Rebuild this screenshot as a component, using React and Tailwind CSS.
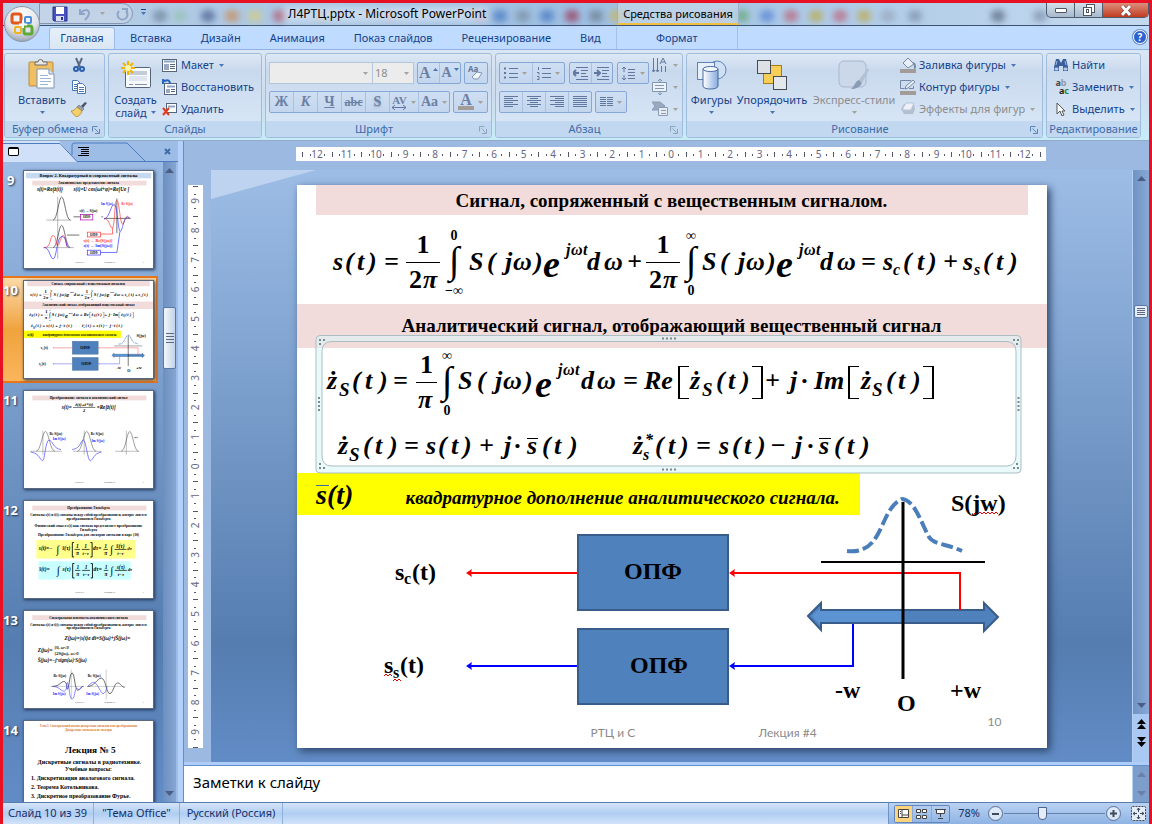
import React from "react";

const UI = "font-['Noto_Sans','Open_Sans',sans-serif]";
const SERIF = "font-['Liberation_Serif',serif]";

/* ---------- small shared pieces ---------- */

const Caret = ({ off }) => (
  <svg width="5" height="3" viewBox="0 0 5 3" className="shrink-0">
    <path d="M0 0h5L2.5 3z" fill={off ? "#a5a29b" : "#4a76b5"} />
  </svg>
);

const Launcher = ({ off }) => (
  <svg width="9" height="9" viewBox="0 0 9 9" fill="none" stroke={off ? "#8fa3be" : "#5d84b8"}>
    <path d="M1.5 6.500V1.500H6.500" />
    <path d="M3.500 3.500l4 4M8.500 4v4.500H4" />
  </svg>
);

const Group = ({ title, className, launcher, off, children }) => (
  <section
    className={`${className} flex shrink-0 flex-col overflow-hidden rounded-[3px] border border-[#9fbddb] bg-linear-to-b from-[#dde8f5] via-[#c9d9ed] via-20% to-[#dbe9f8]`}
  >
    <div className="flex h-[68px]">{children}</div>
    <footer className={`flex h-4 items-center bg-[#c1d8f0] text-[11px] leading-4 text-[#3e6aaa] ${launcher ? "px-1" : ""}`}>
      <span className="flex-1 text-center whitespace-nowrap">{title}</span>
      {launcher && (
        <button aria-label={`${title}: параметры`}>
          <Launcher off={off} />
        </button>
      )}
    </footer>
  </section>
);

const BigButton = ({ icon, label, second, off, className }) => (
  <button
    className={`${className} flex flex-col items-center pt-[2px] text-[11px] leading-[13px] ${off ? "text-[#8d8d8d]" : "text-[#15428b]"}`}
  >
    <span className="flex h-[37px] items-center">{icon}</span>
    <span className="whitespace-nowrap">{label}</span>
    <span className="flex h-[13px] items-center gap-1">
      {second}
      <Caret off={off} />
    </span>
  </button>
);

const SmallButton = ({ icon, label, caret, off }) => (
  <button
    aria-label={label ? undefined : "Команда"}
    className={`flex h-[22px] items-center gap-[3px] text-[11px] whitespace-nowrap ${off ? "text-[#8d8d8d]" : "text-[#15428b]"}`}
  >
    {icon}
    {label}
    {caret && (
      <span className="pl-[2px]">
        <Caret off={off} />
      </span>
    )}
  </button>
);

const Strip = ({ className = "", children }) => (
  <div
    className={`flex h-[22px] divide-x divide-[#a9c1e0] rounded-[2px] border border-[#85a8d6] bg-linear-to-b from-[#cfdff3] to-[#c3d6ee] ${className}`}
  >
    {children}
  </div>
);

const Tool = ({ name, caret, className = "flex-1", children }) => (
  <button
    aria-label={name}
    disabled
    className={`flex items-center justify-center gap-1 text-[#6b80a3] ${className}`}
  >
    {children}
    {caret && <Caret off />}
  </button>
);

const Lines = ({ rows, x = 1 }) => (
  <svg width="16" height="12" viewBox="0 0 16 12" stroke="#60789d">
    {rows.map(([from, to], i) => (
      <path key={i} d={`M${from + x} ${i * 2 + 0.5}H${to + x}`} />
    ))}
  </svg>
);

/* ---------- icons ---------- */

const PasteIcon = () => (
  <svg width="28" height="31" viewBox="0 0 28 31">
    <rect x="1" y="3" width="24" height="24" rx="1" fill="#efbf62" stroke="#b98b3b" />
    <path d="M7 5V3h3a2.500 2.500 0 0 1 5 0h4v3H7z" fill="#e8e8e8" stroke="#6b6b6b" />
    <path d="M9 10h12l5 5v14H9z" fill="#fff" stroke="#7c93b3" />
    <path d="M21 10v5h5" fill="#dce7f5" stroke="#7c93b3" />
    <path d="M12 16.500h8M12 19.500h11M12 22.500h11M12 25.500h8" stroke="#9cb4d6" />
  </svg>
);

const CutIcon = () => (
  <svg width="16" height="16" viewBox="0 0 16 16" fill="none">
    <path d="M5 1l4 9M11 1L7 10" stroke="#5a6b82" strokeWidth="2" />
    <circle cx="5" cy="12" r="2" stroke="#2b5fb0" strokeWidth="2" />
    <circle cx="11" cy="12" r="2" stroke="#2b5fb0" strokeWidth="2" />
  </svg>
);

const CopyIcon = () => (
  <svg width="16" height="16" viewBox="0 0 16 16" fill="#fff" stroke="#4a77b8">
    <path d="M1.500 1.500h5l3 3v7h-8z" />
    <path d="M3 5.500h5M3 7.500h5M3 9.500h3" />
    <path d="M6.500 4.500h5l3 3v7h-8z" />
    <path d="M8 8.500h5M8 10.500h5M8 12.500h5" />
  </svg>
);

const BrushIcon = () => (
  <svg width="16" height="16" viewBox="0 0 16 16">
    <path d="M10 5l4-4 2 1-4 5z" fill="#4a5568" />
    <path d="M8 4l5 4-2 2-5-4z" fill="#9aa4b4" stroke="#555" strokeWidth=".5" />
    <path d="M6 6l5 4c-1 3-3 5-5 6-2-1-4-3-6-6 3 0 4-2 6-4z" fill="#f3d06a" stroke="#a87b22" strokeWidth=".7" />
  </svg>
);

const NewSlideIcon = () => (
  <svg width="30" height="28" viewBox="0 0 30 28">
    <rect x="4.500" y="6.500" width="25" height="20" rx="1" fill="#f7fafd" stroke="#56657e" />
    <rect x="8" y="10" width="18" height="4" fill="#c4ccda" />
    <rect x="8" y="15" width="18" height="5" fill="#dfe5ef" />
    <path d="M8 23.500h4M14 23.500h12" stroke="#8392ab" />
    <path d="M7 0v14M0 7h14M2 2l10 10M12 2L2 12" stroke="#f0b400" strokeWidth="2" />
    <circle cx="7" cy="7" r="3" fill="#fff7b0" />
  </svg>
);

const LayoutIcon = () => (
  <svg width="16" height="14" viewBox="0 0 16 14">
    <rect x=".5" y="1.500" width="14" height="12" fill="#fff" stroke="#56657e" />
    <path d="M2 3.500h11" stroke="#8ea4c6" strokeWidth="2" />
    <rect x="2" y="6" width="5" height="6" fill="#9aa9c2" />
    <path d="M8 6.500h5M8 8.500h5M8 10.500h5" stroke="#56657e" />
  </svg>
);

const ResetIcon = () => (
  <svg width="16" height="16" viewBox="0 0 16 16">
    <rect x="2.500" y="4.500" width="12" height="11" fill="#fff" stroke="#56657e" />
    <path d="M5 7.500h8" stroke="#8ea4c6" strokeWidth="2" />
    <path d="M4 10h4v4H4z" fill="#9aa9c2" />
    <path d="M9 10.500h4M9 12.500h4" stroke="#56657e" />
    <path d="M1 5V1l2 1c3-2 5 0 5 3" fill="none" stroke="#2a62bf" strokeWidth="2" />
  </svg>
);

const DeleteIcon = () => (
  <svg width="16" height="14" viewBox="0 0 16 14">
    <rect x="4.500" y="1.500" width="10" height="9" fill="#fff" stroke="#56657e" />
    <path d="M6 4.500h7" stroke="#8ea4c6" strokeWidth="2" />
    <path d="M1 6l6 7M7 6l-6 7" stroke="#e03a1c" strokeWidth="2" />
  </svg>
);

const ShapesIcon = () => (
  <svg width="30" height="30" viewBox="0 0 30 30">
    <defs>
      <linearGradient id="cyl" x1="0" x2="1">
        <stop offset="0" stopColor="#fff" />
        <stop offset="1" stopColor="#86abdf" />
      </linearGradient>
    </defs>
    <circle cx="20" cy="10" r="9" fill="#cfe0f5" stroke="#5c82b8" />
    <rect x=".5" y="2.500" width="17" height="17" fill="#e6effa" stroke="#5c82b8" />
    <path d="M6 9v17c0 4 15 4 15 0V9" fill="url(#cyl)" stroke="#46699c" />
    <ellipse cx="13.500" cy="9" rx="7.500" ry="2.500" fill="#f4f9ff" stroke="#46699c" />
  </svg>
);

const ArrangeIcon = () => (
  <svg width="32" height="31" viewBox="0 0 32 31">
    <rect x="7.500" y="6.500" width="18" height="18" fill="#f8cf56" stroke="#a97e18" />
    <rect x="1.500" y="1.500" width="13" height="13" fill="#dde1e6" stroke="#454b55" />
    <rect x="17.500" y="17.500" width="13" height="13" fill="#e4e7eb" stroke="#454b55" />
  </svg>
);

const StylesIcon = () => (
  <svg width="32" height="32" viewBox="0 0 32 32">
    <rect x="1" y="2" width="27" height="26" rx="5" fill="#cbd8ea" stroke="#a8b7cd" />
    <path d="M30 9L21 21l3 3 7-13z" fill="#b3c0d2" />
    <path d="M21 21l3 3c-2 4-6 6-11 6 4-3 4-8 8-9z" fill="#8a9bb5" />
  </svg>
);

const FillIcon = () => (
  <svg width="16" height="16" viewBox="0 0 16 16">
    <path d="M3 6l5-5 6 6-6 4z" fill="#e9eff7" stroke="#7487a5" />
    <path d="M13 6c3 1 2 5 1 5" fill="none" stroke="#7487a5" strokeWidth="2" />
    <rect y="12" width="16" height="4" fill="#a39b97" />
  </svg>
);

const OutlineIcon = () => (
  <svg width="16" height="16" viewBox="0 0 16 16">
    <path d="M11 1.500H.5v8h4M13.500 7v2.500H9" fill="none" stroke="#7487a5" />
    <path d="M5 10l1-3 7-6 2 2-7 6z" fill="#e9eff7" stroke="#7487a5" />
    <rect y="12" width="16" height="4" fill="#a39b97" />
  </svg>
);

const EffectsIcon = () => (
  <svg width="16" height="16" viewBox="0 0 16 16">
    <path d="M1 8l3-5h10l1 5-2 5H4z" fill="#b4bfd0" />
    <path d="M3 7l3-5h8l-3 7H3z" fill="#eef2f8" stroke="#bac5d6" />
  </svg>
);

const FindIcon = () => (
  <svg width="16" height="14" viewBox="0 0 16 14">
    <path d="M3 1h3l2 4 2-4h3l2 8v4h-5V8H6v5H1V9z" fill="#3a5f9e" />
    <path d="M2 10h3v2H2zM11 10h3v2h-3zM4 3l-1 4M12 3l1 4" fill="#dfe9f8" stroke="#9fb8dd" />
  </svg>
);

const ReplaceIcon = () => (
  <span className="flex w-4 flex-col text-[9px] leading-[8px] font-bold">
    <span className="text-[#444]">
      a<span className="text-[#8d99aa]">b</span>
    </span>
    <span className="text-right text-[#222]">
      a<span className="text-[#1c8a2b]">c</span>
    </span>
  </span>
);

const SelectIcon = () => (
  <svg width="16" height="14" viewBox="0 0 16 14">
    <path d="M4 1v11l3-3 2 5 2-1-2-4h3z" fill="#fff" stroke="#555" />
  </svg>
);

const OfficeOrb = () => (
  <svg width="38" height="38" viewBox="0 0 38 38">
    <defs>
      <radialGradient id="orb" cx=".5" cy=".25" r=".8">
        <stop offset="0" stopColor="#fff" />
        <stop offset=".6" stopColor="#dfe3ea" />
        <stop offset="1" stopColor="#8c99ad" />
      </radialGradient>
    </defs>
    <circle cx="19" cy="19" r="17.500" fill="url(#orb)" stroke="#8b98ac" />
    <g fill="none" strokeWidth="3">
      <rect x="9" y="9" width="9" height="9" rx="2" stroke="#e2591b" />
      <rect x="22" y="12" width="6" height="6" rx="1" stroke="#4b8fd8" strokeWidth="2" />
      <rect x="12" y="22" width="6" height="6" rx="1" stroke="#f1b31c" strokeWidth="2" />
      <rect x="21" y="21" width="8" height="8" rx="2" stroke="#5faa35" />
    </g>
    <path d="M20 15v8M16 19.500h8" stroke="#f6f8fb" strokeWidth="2" />
  </svg>
);

/* ---------- slide contents ---------- */

const M = ({ x, y, s = 26, a, children }) => (
  <text x={x} y={y} fontSize={s} textAnchor={a}>
    {children}
  </text>
);

const Row = ({ y, items }) =>
  items.map(([t, x], i) => (
    <M key={i} x={x} y={y}>
      {t}
    </M>
  ));

const Fraction = ({ x, w, y, bottom }) => (
  <>
    <g className="not-italic">
      <M x={x + w / 2} y={y - 9} a="middle">1</M>
    </g>
    <path d={`M${x} ${y + 0.5}h${w}`} stroke="#000" />
    {bottom}
  </>
);

const Integral = ({ x, y, top, low }) => (
  <g className="not-italic">
    <M x={x} y={y} s={38} a="middle">∫</M>
    <M x={x} y={y - 33} s={14} a="middle">{top}</M>
    <M x={x} y={y + 22} s={14} a="middle">{low}</M>
  </g>
);

const Exponent = ({ x, y }) => (
  <>
    <M x={x} y={y + 8} s={38}>e</M>
    <M x={x + 23} y={y - 14} s={16}>j</M>
    <M x={x + 28} y={y - 14} s={16}>ω</M>
    <M x={x + 40} y={y - 14} s={16}>t</M>
  </>
);

const Formulas = () => (
  <g className={`${SERIF} font-bold italic`}>
    <Row y={270} items={[["s", 333], ["(", 345], ["t", 357], [")", 368], ["=", 384]]} />
    {[0, 240].map((dx) => (
      <Fraction key={dx} x={406 + dx} w={34} y={262} bottom={
        <>
          <g className="not-italic"><M x={409 + dx} y={288}>2</M></g>
          <M x={423 + dx} y={288}>π</M>
        </>
      } />
    ))}
    <Integral x={454} y={273} top="0" low="−∞" />
    <Integral x={691} y={273} top="∞" low="0" />
    {[0, 233].map((dx) => (
      <g key={dx}>
        <Row y={270} items={[["S", 469 + dx], ["(", 487 + dx], ["j", 505 + dx], ["ω", 513 + dx], [")", 534 + dx], ["d", 587 + dx], ["ω", 604 + dx]]} />
        <Exponent x={543 + dx} y={269} />
      </g>
    ))}
    <Row y={270} items={[["+", 627], ["=", 861], ["s", 883], ["(", 903], ["t", 917], [")", 928], ["+", 943], ["s", 963], ["(", 983], ["t", 996], [")", 1009]]} />
    <M x={893} y={275} s={16}>c</M>
    <M x={974} y={275} s={16}>s</M>

    <Row y={389} items={[["ż", 327], ["(", 352], ["t", 365], [")", 379], ["=", 393], ["S", 458], ["(", 477], ["j", 495], ["ω", 503], [")", 524], ["d", 581], ["ω", 597], ["=", 623], ["Re", 644], ["ż", 690], ["(", 716], ["t", 728], [")", 741], ["+", 765], ["j", 790], ["·", 801], ["Im", 814], ["ż", 861], ["(", 886], ["t", 898], [")", 912]]} />
    {[339, 702, 872].map((x) => (
      <M key={x} x={x} y={396} s={19}>S</M>
    ))}
    <Fraction x={416} w={21} y={382} bottom={<M x={418} y={408}>π</M>} />
    <Integral x={447} y={393} top="∞" low="0" />
    <Exponent x={535} y={389} />
    <path d="M679 366v33M762 366v33M849 366v33M933 366v33" stroke="#000" strokeWidth="2" />
    <path d="M689 366.500h-10M689 398.500h-10M752 366.500h10M752 398.500h10M859 366.500h-10M859 398.500h-10M923 366.500h10M923 398.500h10" stroke="#000" />

    <Row y={454} items={[["ż", 338], ["(", 363], ["t", 375], [")", 389], ["=", 404], ["s", 426], ["(", 438], ["t", 451], [")", 463], ["+", 479], ["j", 504], ["·", 514], ["s", 527], ["(", 542], ["t", 554], [")", 569]]} />
    <Row y={454} items={[["ż", 633], ["(", 655], ["t", 668], [")", 680], ["=", 696], ["s", 719], ["(", 732], ["t", 744], [")", 757], ["−", 770], ["j", 795], ["·", 807], ["s", 819], ["(", 834], ["t", 847], [")", 861]]} />
    <M x={349} y={461} s={19}>S</M>
    <M x={643} y={460} s={16}>s</M>
    <M x={645} y={445} s={16}>*</M>
    <path d="M527 438.500h11M819 438.500h12" stroke="#000" />
    <M x={316} y={504} s={28}>s(t)</M>
    <path d="M316 485.500h13" stroke="#3a6ea5" />
  </g>
);

const Diagram = () => (
  <g className={`${SERIF} font-bold`}>
    <g fill="#4f81bd" stroke="#385d8a" strokeWidth="2">
      <rect x="578" y="535" width="150" height="75" />
      <rect x="578" y="629" width="150" height="75" />
      <path d="M808 616l13-13v7h163v-7l14 14-14 14v-8H821v7z" />
    </g>
    <path d="M812 616l8-8v3h82v11h-82v3z" fill="#5b93d3" />
    <M x={624} y={579} s={24}>ОПФ</M>
    <M x={630} y={673} s={24}>ОПФ</M>
    <M x={395} y={580} s={24}>s</M>
    <M x={404} y={584} s={16}>c</M>
    <M x={412} y={580} s={24}>(t)</M>
    <M x={384} y={673} s={24}>s</M>
    <M x={393} y={678} s={16}>s</M>
    <M x={400} y={673} s={24}>(t)</M>
    <path d="M384 676l2-2 2 2 2-2 2 2M393 681l2-2 2 2 2-2 2 2" fill="none" stroke="#e00000" />
    <path d="M974 514l2-2 2 2 2-2 2 2 2-2 2 2 2-2 2 2 2-2 2 2 2-2 2 2" fill="none" stroke="#e00000" />
    <g fill="none" strokeWidth="2">
      <path d="M577 573H470M960 610V573H733" stroke="#f00" />
      <path d="M577 666H470M853 624V666H733" stroke="#00f" />
      <path d="M821 562H985" stroke="#000" />
    </g>
    <path d="M466 573l6-4-1 4 1 4zM729 573l6-4-1 4 1 4z" fill="#f00" />
    <path d="M466 666l6-4-1 4 1 4zM729 666l6-4-1 4 1 4z" fill="#00f" />
    <path d="M847 551C885 555 878 510 902 499C915 500 922 525 928 535C932 545 945 543 962 551" fill="none" stroke="#4a7ebb" strokeWidth="4" strokeDasharray="12 4" />
    <path d="M903 502V679" stroke="#000" strokeWidth="3" />
    <M x={951} y={511} s={24}>S(jw)</M>
    <M x={835} y={698} s={24}>-w</M>
    <M x={897} y={711} s={24}>O</M>
    <M x={950} y={698} s={24}>+w</M>
  </g>
);

const Selection = () => (
  <g>
    <path
      fillRule="evenodd"
      d="M320 335.500H1017q4 0 4 4V469q0 4-4 4H320q-4 0-4-4V339.500q0-4 4-4zM332 341.500q-10 0-10 10V456q0 10 10 10H1006q10 0 10-10V351.500q0-10-10-10z"
      fill="#dcf5f6"
      fillOpacity=".6"
      stroke="#a9bfc4"
    />
    <path d="M319 340h6M319 344h3M1013 340h6M1016 344h3M319 468h6M319 464h3M1013 468h6M1016 464h3M662 338.500h14M662 469.500h14M319 397v14M1018.500 397v14" stroke="#7c8a8e" strokeWidth="2" strokeDasharray="2 2" />
  </g>
);

const Slide = () => (
  <article className="relative h-[563px] w-[750px] shrink-0 bg-white text-black shadow-[3px_3px_8px_#2b4468]">
    <h2 className={`${SERIF} mx-[19px] h-[30px] bg-[#f2dcdb] text-center text-[19px] leading-[32px] font-bold`}>
      Сигнал, сопряженный с вещественным сигналом.
    </h2>
    <h2 className={`${SERIF} mt-[89px] h-11 bg-[#f2dcdb] text-center text-[19px] leading-[44px] font-bold`}>
      Аналитический сигнал, отображающий вещественный сигнал
    </h2>
    <p className={`${SERIF} mt-[125px] h-[42px] w-[563px] bg-[#ff0] pl-[109px] text-[19px] leading-[50px] font-bold whitespace-nowrap italic`}>
      квадратурное дополнение аналитического сигнала.
    </p>
    <svg viewBox="297 185 750 563" className="absolute inset-0 h-full w-full">
      <Formulas />
      <Selection />
      <Diagram />
    </svg>
    <footer className="absolute inset-x-0 bottom-2 flex pl-[294px] font-['Lato',sans-serif] text-xs leading-[14px] text-[#8b8b8b]">
      <span className="w-[168px]">РТЦ и С</span>
      <span>Лекция #4</span>
    </footer>
    <span className="absolute right-[45px] bottom-[18px] font-['Lato',sans-serif] text-xs text-[#8b8b8b]">10</span>
  </article>
);

/* ---------- thumbnails, drawn in slide units (750 x 563) ---------- */

const T = ({ x = 375, y, s = 18, a = "middle", fill, children }) => (
  <text x={x} y={y} fontSize={s} textAnchor={a} fill={fill}>
    {children}
  </text>
);

const Band = ({ y = 54, children }) => (
  <>
    <rect x="48" y={y} width="664" height="28" fill="#f2dcdb" />
    <T y={y + 21} s={20}>{children}</T>
  </>
);

const ThumbFooter = () => (
  <g>
    <T x={325} y={535} s={14} fill="#777">РТЦ и С</T>
    <T x={497} y={535} s={14} fill="#777">Лекция #4</T>
    <T x={695} y={535} s={14} fill="#e08a3c">9</T>
  </g>
);

const bell = (x, base, h, w) =>
  `M${x - w} ${base}C${x - w / 2} ${base} ${x - w / 3} ${base - h} ${x} ${base - h}S${x + w / 2} ${base} ${x + w} ${base}`;

const Thumb9 = () => (
  <>
    <rect x="12" y="10" width="728" height="32" fill="#c6d9f1" />
    <T y={34} s={25}>Вопрос 2. Квадратурный и сопряженный сигналы</T>
    <Band y={56}>Аналитическое представление сигнала</Band>
    <g className="italic">
      <T x={75} y={118} s={30} a="start">s(t)=Re{"{ż(t)}"}</T>
      <T x={288} y={118} s={30} a="start">s(t)=U cos(ωt+φ)=Re[Ue ]</T>
    </g>
    <g fill="none" stroke="#333" strokeWidth="4">
      <path d={bell(219, 285, 135, 50)} />
      <path d="M130 285H275M196 150V510M120 445H290" strokeWidth="2" />
      <path d={bell(219, 445, 130, 50)} />
      <path d="M288 266H330M450 266H460M540 160V360M465 275H620" />
      <path d="M322 372H250" />
    </g>
    <g fill="none" stroke="#f33" strokeWidth="4">
      <path d="M465 275C500 275 500 340 515 330C530 310 525 170 540 170S560 350 580 300S600 260 615 275" />
      <path d="M515 330V366H445M115 445C160 450 150 370 170 375S185 450 200 430S225 310 250 440" />
    </g>
    <g fill="none" stroke="#33f" strokeWidth="4">
      <path d="M465 280C500 270 505 190 525 195S545 350 560 350S580 240 615 275" />
      <path d="M558 350L540 473H445M115 445C150 440 150 510 170 510S190 380 220 380S240 440 260 445" />
    </g>
    <g fill="#fff" stroke="#a0a" strokeWidth="4">
      <rect x="328" y="252" width="72" height="32" />
      <rect x="368" y="355" width="76" height="28" stroke="#f33" />
      <rect x="368" y="460" width="76" height="28" stroke="#33f" />
    </g>
    <T x={364} y={274}>ОПФ</T>
    <T x={406} y={376}>ОПФ</T>
    <T x={406} y={481}>ОПФ</T>
    <T x={375} y={238} s={20}>s(t) → S(jω)</T>
    <T x={430} y={412} s={24} fill="#f22">s(t) → Re[S(jω)]</T>
    <T x={430} y={440} s={24} fill="#22f">s(t) → Im[S(jω)]</T>
    <T x={482} y={198} s={18} fill="#22f">Im S(jω)</T>
    <T x={600} y={198} s={18} fill="#f22">Re S(jω)</T>
    <ThumbFooter />
  </>
);

const Thumb11 = () => (
  <>
    <Band y={26}>Преобразование сигнала в аналитический сигнал</Band>
    <g className="italic">
      <T x={220} y={102} s={30} a="start">s(t)=</T>
      <T x={350} y={86} s={28}>ż(t)+ż*(t)</T>
      <path d="M285 95H415" stroke="#000" strokeWidth="3" />
      <T x={350} y={121} s={26}>2</T>
      <T x={478} y={102} s={30}>=Re[ż(t)]</T>
    </g>
    <g fill="none" stroke="#444" strokeWidth="3">
      <path d={`${bell(125, 350, 115, 55)}${bell(365, 350, 115, 55)}${bell(615, 350, 115, 50)}`} />
      <path d="M35 350H220M285 350H450M530 350H670M110 230V370M350 230V370M595 230V370" strokeWidth="2" />
    </g>
    <g fill="none" stroke="#44f" strokeWidth="4">
      <path d="M40 355C90 360 95 405 108 405S125 285 145 285S170 335 215 340" />
      <path d="M280 340C330 335 330 285 345 285S370 405 385 405S405 360 450 355" />
    </g>
    <T x={185} y={257} s={20}>Re S(jω)</T>
    <T x={205} y={287} s={20} fill="#22f">Im S(jω)</T>
    <T x={425} y={257} s={20}>Re S(jω)</T>
    <T x={430} y={297} s={20} fill="#22f">Im S(jω)</T>
    <T x={650} y={270} s={16}>s(t)</T>
    <ThumbFooter />
  </>
);

const IntegralLine = ({ x, y, l, r }) => (
  <g className="italic">
    <T x={x} y={y} s={32} a="start">{l}</T>
    <T x={x + 110} y={y + 14} s={60}>∫</T>
    <T x={x + 160} y={y} s={32}>{r}</T>
    <path d={`M${x + 205} ${y - 45}h-10v84h10M${x + 300} ${y - 45}h10v84h-10`} fill="none" stroke="#000" strokeWidth="5" />
    <T x={x + 225} y={y - 12} s={32}>1</T>
    <T x={x + 225} y={y + 30} s={32}>π</T>
    <T x={x + 273} y={y - 12} s={32}>1</T>
    <T x={x + 273} y={y + 30} s={28}>t−τ</T>
    <path d={`M${x + 208} ${y - 5}h32M${x + 250} ${y - 5}h45M${x + 376} ${y - 5}h26M${x + 440} ${y - 5}h70`} stroke="#000" strokeWidth="4" />
    <T x={x + 340} y={y} s={32}>dτ=</T>
    <T x={x + 389} y={y - 12} s={32}>1</T>
    <T x={x + 389} y={y + 30} s={32}>π</T>
    <T x={x + 422} y={y + 14} s={60}>∫</T>
    <T x={x + 475} y={y - 12} s={32}>{r}</T>
    <T x={x + 475} y={y + 30} s={28}>t−τ</T>
    <T x={x + 528} y={y} s={28}>dτ</T>
  </g>
);

const Thumb12 = () => (
  <>
    <Band y={26}>Преобразование Гильберта</Band>
    <T y={84} s={20}>Сигналы s(t) и s̄(t) связаны между собой преобразованием, которое зовется</T>
    <T y={108} s={20}>преобразованием Гильберта</T>
    <T y={152} s={21}>Физический смысл s(t) как сигнала представляет преобразование</T>
    <T y={176} s={21}>Гильберта</T>
    <T y={205} s={21}>Преобразование Гильберта для спектров сигналов в паре (10)</T>
    <rect x="72" y="226" width="576" height="108" fill="#ffff8c" />
    <rect x="84" y="350" width="536" height="106" fill="#c8ffff" />
    <IntegralLine x={86} y={286} l="s(t)=−" r="s̄(τ)" />
    <IntegralLine x={88} y={408} l="s̄(t)=" r="s(τ)" />
    <ThumbFooter />
  </>
);

const Thumb13 = () => (
  <>
    <Band y={24}>Спектральная плотность аналитического сигнала</Band>
    <T y={84} s={20}>Сигналы s(t) и s̄(t) связаны между собой преобразованием, которое зовется</T>
    <T y={106} s={20}>преобразованием Гильберта</T>
    <g className="italic">
      <T x={235} y={168} s={31} a="start">Z(jω)=∫s(t)e dt=S(jω)+jS̄(jω)=</T>
      <T x={80} y={240} s={30} a="start">Z(jω)=</T>
      <T x={178} y={222} s={26} a="start">{"{0, ω<0"}</T>
      <T x={178} y={254} s={26} a="start">{"{2S(jω), ω>0"}</T>
      <T x={80} y={297} s={30} a="start">S̄(jω)=−j·sign(ω)·S(jω)</T>
    </g>
    <g fill="none" strokeWidth="4">
      <path d="M150 438H350M275 340V515M370 438H590M478 340V515" stroke="#777" strokeWidth="2" />
      <path d="M165 438C210 438 215 405 235 410S245 470 255 450S265 360 280 360S295 460 312 460S330 435 345 438" stroke="#222" />
      <path d="M165 438C210 438 215 470 235 465S245 400 255 420S262 510 280 510S295 430 312 450S330 435 345 438" stroke="#55f" />
      <path d="M370 438C410 438 425 390 450 390S480 485 500 480S525 415 545 418S560 435 585 445" stroke="#333" />
      <path d="M370 438C390 420 405 400 425 430S450 485 465 478S480 440 485 438" stroke="#55f" />
    </g>
    <T x={208} y={385} s={20}>Re S(jω)</T>
    <T x={205} y={488} s={20} fill="#22f">Im S(jω)</T>
    <T x={408} y={385} s={20}>Re S(jω)</T>
    <T x={400} y={488} s={20} fill="#22f">Im S(jω)</T>
    <ThumbFooter />
  </>
);

const Thumb14 = () => (
  <>
    <T y={32} s={17} fill="#d9772c">Тема 3. Спектральный анализ дискретных сигналов и их преобразования</T>
    <T y={56} s={17} fill="#d9772c">Дискретные сигналы и их спектры</T>
    <T x={386} y={188} s={54}>Лекция № 5</T>
    <T x={380} y={248} s={35}>Дискретные сигналы в радиотехнике.</T>
    <T y={292} s={32}>Учебные вопросы:</T>
    <T x={40} y={344} s={34} a="start">1. Дискретизация аналогового сигнала.</T>
    <T x={40} y={396} s={34} a="start">2. Теорема Котельникова.</T>
    <T x={40} y={448} s={34} a="start">3. Дискретное преобразование Фурье.</T>
  </>
);

const Thumb10 = () => (
  <g transform="translate(-297 -185)">
    <rect x="316" y="185" width="712" height="30" fill="#f2dcdb" />
    <T x={672} y={207} s={19}>Сигнал, сопряженный с вещественным сигналом.</T>
    <rect x="297" y="304" width="750" height="44" fill="#f2dcdb" />
    <T x={672} y={332} s={19}>Аналитический сигнал, отображающий вещественный сигнал</T>
    <rect x="297" y="473" width="563" height="42" fill="#ff0" />
    <g className="italic"><T x={622} y={504} s={19}>квадратурное дополнение аналитического сигнала.</T></g>
    <Formulas />
    <Diagram />
  </g>
);

const thumbs = [
  { n: 9, Art: Thumb9 },
  { n: 10, Art: Thumb10, active: true },
  { n: 11, Art: Thumb11 },
  { n: 12, Art: Thumb12 },
  { n: 13, Art: Thumb13 },
  { n: 14, Art: Thumb14 },
];

/* ---------- rulers ---------- */

const CM = 29.5;

const Ruler = ({ span, vertical }) => {
  const length = vertical ? 563 : 750;
  const mid = length / 2;
  const marks = [];
  for (let i = -span; i <= span; i++) marks.push(i);
  const ticks = [];
  for (let q = -span * 4 - 2; q <= span * 4 + 2; q++) {
    if (q % 4 === 0) continue;
    const p = Math.round(mid + (q * CM) / 4) + 0.5;
    const half = q % 2 === 0;
    ticks.push(vertical ? `M${half ? 5 : 6} ${p}h${half ? 5 : 2}` : `M${p} ${half ? 5 : 7}v${half ? 5 : 2}`);
  }
  return (
    <svg
      width={vertical ? 15 : length}
      height={vertical ? length : 14}
      className={`shrink-0 bg-white ${UI} text-[10px]`}
    >
      <path d={ticks.join("")} stroke="#55556a" />
      {marks.map((i) =>
        vertical ? (
          <text key={i} transform={`translate(11 ${mid + i * CM}) rotate(-90)`} textAnchor="middle" fill="#666680">
            {Math.abs(i)}
          </text>
        ) : (
          <text key={i} x={mid + i * CM} y="11" textAnchor="middle" fill="#666680">
            {Math.abs(i)}
          </text>
        ),
      )}
    </svg>
  );
};

const Arrow = ({ up, fill = "#4a5d85" }) => (
  <svg width="9" height="5" viewBox="0 0 9 5">
    <path d={up ? "M0 5h9L4.500 0z" : "M0 0h9L4.500 5z"} fill={fill} />
  </svg>
);

/* ---------- window parts ---------- */

const blobs = [
  [160, "#5c7088"], [180, "#8fc0a5"], [208, "#2e3f77"], [232, "#d27c2e"], [255, "#e0cf62"], [280, "#b23848"],
  [320, "#d8a060"], [390, "#e09090"], [480, "#e07070"], [500, "#2b62b8"], [523, "#70808f"], [547, "#2b62b8"],
  [572, "#9c1030"], [596, "#606a78"], [617, "#d8b030"], [718, "#e09080"], [742, "#50a050"], [767, "#3a70d0"],
  [791, "#c04858"], [816, "#c0a020"], [840, "#c04858"], [864, "#c0a020"], [888, "#8f9bad"], [915, "#70809a"], [998, "#3a4a60"], [1040, "#70809a"],
];

const TitleBar = () => (
  <header className="relative flex h-[23px] shrink-0 border-b border-[#3c5272] bg-linear-to-r from-[#b9cfe6] via-[#9dbfe2] to-[#c4d9ee] text-xs">
    <svg className="absolute inset-0 h-full w-full blur-[3px]" aria-hidden="true">
      {blobs.map(([x, c]) => (
        <rect key={x} x={x - 10} y="7" width="14" height="12" rx="5" fill={c} opacity=".55" />
      ))}
      <rect x="280" y="4" width="205" height="15" fill="#d6e4f3" opacity=".7" />
    </svg>
    <div className="relative ml-9 flex h-[21px] w-[94px] items-center gap-[10px] rounded-r-full border border-[#8196b3] bg-[#c5d5e8]/80 pl-3">
      <button aria-label="Сохранить">
        <svg width="16" height="16" viewBox="0 0 16 16">
          <path d="M1 1h14v14H2l-1-1z" fill="#4a52c0" stroke="#27308c" />
          <rect x="4" y="1" width="8" height="7" fill="#fff" />
          <rect x="4" y="10" width="8" height="5" fill="#d9dff2" />
          <rect x="9" y="11" width="2" height="3" fill="#27308c" />
        </svg>
      </button>
      <button aria-label="Отменить" className="flex items-center gap-2">
        <svg width="14" height="14" viewBox="0 0 14 14" fill="none" stroke="#8fa5c5" strokeWidth="2">
          <path d="M2 2v5h5M2 7c3-5 9-5 9-1 0 3-2 5-4 7" />
        </svg>
        <Caret off />
      </button>
      <button aria-label="Повторить">
        <svg width="14" height="14" viewBox="0 0 14 14" fill="none" stroke="#8fa5c5" strokeWidth="2">
          <path d="M11 4a5 5 0 1 1-7 0M7 2h5v5" />
        </svg>
      </button>
    </div>
    <button aria-label="Настройка панели" className="relative ml-2 flex flex-col items-center justify-center gap-[2px] pb-1">
      <span className="h-px w-[5px] bg-[#15428b]" />
      <Caret />
    </button>
    <h1 className="relative ml-[142px] leading-[22px] whitespace-pre">Л4РТЦ.pptx - Microsoft PowerPoint</h1>
    <div className="absolute inset-y-0 left-[614px] w-[122px] border-x border-b-2 border-x-[#9ab2d0] border-b-[#f0c040] bg-[#c9dbe9]/60 text-center text-[11px] leading-[22px] whitespace-nowrap">
      Средства рисования
    </div>
    <div className="relative ml-auto flex h-[15px] w-[103px] divide-x divide-[#4d5c70] rounded-b-[5px] border border-t-0 border-[#4d5c70] bg-linear-to-b from-[#d5dfea] to-[#a7b9cd]">
      <button aria-label="Свернуть" className="flex w-7 items-center justify-center">
        <span className="h-[5px] w-3 rounded-[1px] border border-[#4d5564] bg-white" />
      </button>
      <button aria-label="Восстановить" className="flex w-7 items-center justify-center">
        <svg width="12" height="12" viewBox="0 0 12 12" fill="#fff" stroke="#4d5564">
          <rect x="3.500" y=".5" width="8" height="8" />
          <rect x=".5" y="3.500" width="8" height="8" />
          <rect x="3.500" y="5.500" width="2" height="3" />
        </svg>
      </button>
      <button aria-label="Закрыть" className="flex flex-1 items-center justify-center rounded-br-[4px] bg-linear-to-b from-[#dd8d7c] to-[#c03a1c]">
        <svg width="12" height="11" viewBox="0 0 12 11">
          <path d="M2 1l8 9M10 1L2 10" stroke="#5a2a2a" strokeWidth="4" />
          <path d="M2 1l8 9M10 1L2 10" stroke="#fff" strokeWidth="3" />
        </svg>
      </button>
    </div>
    <button aria-label="Office" className="absolute top-[2px] left-0 z-10">
      <OfficeOrb />
    </button>
  </header>
);

const tabs = ["Вставка", "Дизайн", "Анимация", "Показ слайдов", "Рецензирование", "Вид"];

const TabBar = () => (
  <nav className="flex h-6 shrink-0 items-end gap-px border-b border-[#8db2e3] bg-[#bfdbff] pl-[46px] text-[11px] text-[#15428b]">
    <button className="h-[22px] w-[66px] rounded-t-[3px] border border-b-0 border-[#9dbde6] bg-linear-to-b from-[#e6f0fb] to-[#dbe6f4]">Главная</button>
    {tabs.map((t) => (
      <button key={t} className="h-[22px] px-[14px] whitespace-nowrap">{t}</button>
    ))}
    <button className="h-[22px] w-[122px] border-x border-[#a3c0e6]">Формат</button>
    <button aria-label="Справка" className="mr-[2px] mb-[5px] ml-auto flex size-[14px] items-center justify-center rounded-full border border-white bg-[#2a62d0] text-[10px] leading-3 font-bold text-white ring-1 ring-[#7090c8]">?</button>
  </nav>
);

const Ribbon = () => (
  <div className="flex h-[91px] shrink-0 gap-[3px] border-b border-[#94a9c6] bg-linear-to-b from-[#dbe6f4] via-[#cddcee] to-[#c6ecf9] px-px pt-[3px] pb-[2px]">
    <Group title="Буфер обмена" className="w-[101px]" launcher>
      <BigButton icon={<PasteIcon />} label="Вставить" className="w-[66px] pl-2" />
      <div className="flex flex-col">
        <SmallButton icon={<CutIcon />} />
        <SmallButton icon={<CopyIcon />} />
        <SmallButton icon={<BrushIcon />} />
      </div>
    </Group>
    <Group title="Слайды" className="w-[154px]">
      <BigButton icon={<NewSlideIcon />} label="Создать" second="слайд" className="w-[53px]" />
      <div className="flex flex-col">
        <SmallButton icon={<LayoutIcon />} label="Макет" caret />
        <SmallButton icon={<ResetIcon />} label="Восстановить" />
        <SmallButton icon={<DeleteIcon />} label="Удалить" />
      </div>
    </Group>
    <Group title="Шрифт" className="w-[227px]" launcher off>
      <div className="flex w-full flex-col gap-[7px] px-[3px] pt-2">
        <div className="flex gap-[3px]">
          <div className="flex h-[22px] text-[11px] text-[#8d8d8d]">
            <label className="relative flex w-[104px] items-center">
              <select aria-label="Шрифт" disabled className="h-full w-full appearance-none border border-[#b4c6dc] bg-[#ececec]">
                <option></option>
              </select>
              <span className="absolute right-[5px]"><Caret off /></span>
            </label>
            <label className="relative flex w-[41px] items-center">
              <select aria-label="Размер" disabled defaultValue="18" className="h-full w-full appearance-none border border-l-0 border-[#b4c6dc] bg-[#ececec] pl-[2px] opacity-100">
                <option>18</option>
              </select>
              <span className="absolute right-[5px]"><Caret off /></span>
            </label>
          </div>
          <Strip className={`w-[45px] ${SERIF} font-bold`}>
            <Tool name="Увеличить размер"><span className="text-base leading-5">A</span><span className="-ml-[2px] rotate-180 pt-2"><Caret /></span></Tool>
            <Tool name="Уменьшить размер"><span className="text-sm leading-5">A</span><span className="-ml-[2px] pb-2"><Caret /></span></Tool>
          </Strip>
          <Strip className="w-6">
            <Tool name="Очистить формат">
              <svg width="18" height="18" viewBox="0 0 18 18">
                <text x="1" y="8" fontSize="8" fontWeight="bold" fill="#60789d">Аа</text>
                <path d="M5 13l5-5 5 1-4 6H7z" fill="#f4f7fb" stroke="#8094b3" />
              </svg>
            </Tool>
          </Strip>
        </div>
        <div className="flex gap-[3px]">
          <Strip className={`w-[181px] ${SERIF} text-sm font-bold`}>
            <Tool name="Полужирный" className="w-6">Ж</Tool>
            <Tool name="Курсив" className="w-6 italic">К</Tool>
            <Tool name="Подчеркнутый" className="w-6 underline">Ч</Tool>
            <Tool name="Зачеркнутый" className="w-6 text-xs line-through">abc</Tool>
            <Tool name="Тень" className="w-6 text-shadow-md">S</Tool>
            <Tool name="Интервал" className="w-[29px]" caret>
              <span className="flex flex-col items-center text-[11px] leading-[10px]">
                AV
                <svg width="14" height="5" viewBox="0 0 14 5" fill="none" stroke="#60789d">
                  <path d="M0 2.500h14M3 0L0 2.500 3 5M11 0l3 2.500L11 5" />
                </svg>
              </span>
            </Tool>
            <Tool name="Регистр" className="flex-1" caret>Aa</Tool>
          </Strip>
          <Strip className={`w-[35px] ${SERIF} font-bold`}>
            <Tool name="Цвет текста" caret>
              <span className="border-b-4 border-[#a39b97] px-[2px] text-base leading-3">A</span>
            </Tool>
          </Strip>
        </div>
      </div>
    </Group>
    <Group title="Абзац" className="w-[188px]" launcher off>
      <div className="flex flex-col gap-[7px] pt-2 pl-[3px]">
        <div className="flex gap-1">
          <Strip className="w-[66px]">
            <Tool name="Маркеры" caret>
              <svg width="14" height="12" viewBox="0 0 14 12" stroke="#60789d">
                <path d="M0 1.500h2M0 6h2M0 10.500h2" strokeWidth="2" />
                <path d="M5 1.500h9M5 6.500h9M5 10.500h9" />
              </svg>
            </Tool>
            <Tool name="Нумерация" caret>
              <svg width="14" height="13" viewBox="0 0 14 13" stroke="#60789d">
                <path d="M1.500 0v3M0 5.500h2v2M0 9.500h2v3H0M5 1.500h9M5 6.500h9M5 10.500h9" fill="none" />
              </svg>
            </Tool>
          </Strip>
          <Strip className="w-11">
            {["M6 6H0m3-3L0 6l3 3", "M0 6h6m-3-3l3 3-3 3"].map((d) => (
              <Tool key={d} name="Отступ">
                <svg width="15" height="13" viewBox="0 0 15 13" stroke="#60789d" fill="none">
                  <path d="M3 .5h12M8 3.500h7M8 6.500h5M8 9.500h7M3 12.500h12" />
                  <path d={d} strokeWidth="2" />
                </svg>
              </Tool>
            ))}
          </Strip>
          <Strip className="w-8">
            <Tool name="Междустрочный интервал" caret>
              <svg width="15" height="15" viewBox="0 0 15 15" stroke="#60789d" fill="none">
                <path d="M3 1v5M3 9v5M1 3l2-2 2 2M1 12l2 2 2-2M7 3.500h7M7 6.500h7M7 9.500h7M7 12.500h7" />
              </svg>
            </Tool>
          </Strip>
        </div>
        <div className="flex gap-[3px]">
          <Strip className="w-[93px]">
            <Tool name="По левому краю"><Lines rows={[[0, 14], [0, 9], [0, 14], [0, 9], [0, 14], [0, 9]]} /></Tool>
            <Tool name="По центру"><Lines rows={[[0, 14], [3, 11], [0, 14], [3, 11], [0, 14], [3, 11]]} /></Tool>
            <Tool name="По правому краю"><Lines rows={[[0, 14], [5, 14], [0, 14], [5, 14], [0, 14], [5, 14]]} /></Tool>
            <Tool name="По ширине"><Lines rows={[[0, 14], [0, 14], [0, 14], [0, 14], [0, 14], [0, 14]]} /></Tool>
          </Strip>
          <Strip className="w-8">
            <Tool name="Колонки" caret>
              <svg width="13" height="11" viewBox="0 0 13 11">
                <path d="M0 .5h6M0 2.500h6M0 4.500h6M0 6.500h6M0 8.500h6M7 .5h6M7 2.500h6M7 4.500h6M7 6.500h6M7 8.500h6" stroke="#60789d" />
              </svg>
            </Tool>
          </Strip>
        </div>
      </div>
      <div className="flex flex-col pl-[3px]">
        <SmallButton off caret icon={
          <svg width="16" height="16" viewBox="0 0 16 16" stroke="#60789d" fill="none">
            <path d="M1.500 1v14M5.500 1v14M9.500 9v6M13.500 9v6M0 13l1.500 2L3 13M4 13l1.500 2L7 13M8 7l3-6 3 6M9 5h4" />
          </svg>
        } />
        <SmallButton off caret icon={
          <svg width="16" height="16" viewBox="0 0 16 16" stroke="#8094b3" fill="#eef3f9">
            <path d="M.5 3.500h14v9H.5zM3 6.500h9M3 9.500h9M8 0v3M8 13v3M6 2l2-2 2 2M6 14l2 2 2-2" />
          </svg>
        } />
        <SmallButton off caret icon={
          <svg width="16" height="16" viewBox="0 0 16 16" stroke="#8b9bb4">
            <path d="M0 1h8l5 4-5 4H0l3-4z" fill="#9aa9c0" />
            <path d="M6.500 6.500h9v8h-9zM9 9.500h5M9 12.500h5" fill="#e6ebf3" />
          </svg>
        } />
      </div>
    </Group>
    <Group title="Рисование" className="w-[357px]" launcher>
      <BigButton icon={<ShapesIcon />} label="Фигуры" className="w-[49px]" />
      <BigButton icon={<ArrangeIcon />} label="Упорядочить" className="w-[72px]" />
      <BigButton icon={<StylesIcon />} label="Экспресс-стили" className="w-[92px]" off />
      <div className="flex flex-col">
        <SmallButton icon={<FillIcon />} label="Заливка фигуры" caret />
        <SmallButton icon={<OutlineIcon />} label="Контур фигуры" caret />
        <SmallButton icon={<EffectsIcon />} label="Эффекты для фигур" caret off />
      </div>
    </Group>
    <Group title="Редактирование" className="w-[95px]">
      <div className="flex flex-col pl-[6px]">
        <SmallButton icon={<FindIcon />} label="Найти" />
        <SmallButton icon={<ReplaceIcon />} label="Заменить" caret />
        <SmallButton icon={<SelectIcon />} label="Выделить" caret />
      </div>
    </Group>
  </div>
);

const SlidesPanel = () => (
  <aside className="flex w-[175px] shrink-0 flex-col overflow-hidden">
    <div className="relative flex h-[21px] shrink-0 items-center bg-[#9dbde6] pl-[5px]">
      <svg className="absolute inset-0" width="175" height="21">
        <path d="M0 0H56L74 21H0z" fill="#cfe0f8" />
        <path d="M0 2.500H57L74 20.500H175M69 14V4q0-2 3-2H124L143 21" fill="none" stroke="#4c7cc0" />
      </svg>
      <button aria-label="Слайды" className="relative h-[9px] w-[11px] rounded-[2px] border border-t-2 border-black bg-white" />
      <button aria-label="Структура" className="relative ml-[59px]">
        <svg width="11" height="9" viewBox="0 0 11 9" stroke="#000">
          <path d="M0 .5h11M3 2.500h8M3 4.500h8M3 6.500h8M0 8.500h11" />
        </svg>
      </button>
      <button aria-label="Закрыть область" className="relative mr-[7px] ml-auto">
        <svg width="7" height="7" viewBox="0 0 7 7">
          <path d="M1 1l5 5M6 1L1 6" stroke="#3f6ba8" strokeWidth="2" />
        </svg>
      </button>
    </div>
    <div className="flex min-h-0 flex-1 bg-linear-to-b from-[#9bbbe4] via-[#557db0] via-75% to-[#628cc6]">
      <ol className="min-w-0 flex-1 overflow-hidden pt-1">
        {thumbs.map(({ n, Art, active }) => (
          <li
            key={n}
            className={`mb-[3px] flex h-[107px] w-[155px] ${active ? "border-2 border-l-0 border-[#e8761a] bg-linear-to-b from-[#fbd9a5] via-[#f0a33c] to-[#fbb55c] pt-[2px]" : "pt-1"}`}
          >
            <span className="w-5 shrink-0 text-[13px] leading-5 font-bold text-white text-shadow-[1px_1px_2px_#1c2c48]">
              <span className={n === 9 ? "pl-1" : ""}>{n}</span>
            </span>
            <svg
              viewBox="0 0 750 563"
              className={`${SERIF} h-[99px] w-[131px] shrink-0 border border-[#5a6880] bg-white font-bold shadow-[1px_1px_3px_#1f3558]`}
            >
              <Art />
            </svg>
          </li>
        ))}
      </ol>
      <div className="flex w-[13px] shrink-0 flex-col items-center bg-linear-to-r from-[#6c8fc0] to-[#86a6d2] py-[6px]">
        <Arrow up />
        <div className="mt-[134px] flex h-[62px] w-[13px] flex-col items-center justify-center gap-[2px] rounded-[2px] border border-[#5b78a5] bg-linear-to-r from-[#f4f7fb] to-[#c4d3e8]">
          {[0, 1, 2, 3].map((i) => (
            <span key={i} className="h-px w-2 bg-[#5b6b85]" />
          ))}
        </div>
        <div className="mt-auto flex"><Arrow /></div>
      </div>
      <div className="w-[2px] bg-[#9dbde6]" />
    </div>
  </aside>
);

const Editor = () => (
  <main className="flex min-w-0 flex-1 flex-col border-l border-[#5f8fd0]">
    <div className="flex min-h-0 flex-1 flex-col bg-[#9bb9e1]">
      <div className="flex h-[29px] shrink-0 justify-center pt-[6px] pr-[18px] pl-[27px]">
        <Ruler span={12} />
      </div>
      <div className="flex min-h-0 flex-1">
        <div className="flex w-[27px] shrink-0 flex-col items-center justify-center pr-1">
          <Ruler span={9} vertical />
        </div>
        <div className="relative flex min-w-0 flex-1 items-center justify-center overflow-hidden bg-linear-to-b from-[#9dbde6] via-[#557db0] via-80% to-[#628cc6]">
          <svg className="absolute top-0 left-0" width="120" height="30">
            <path d="M0 0H105L0 29z" fill="#bdd3f0" />
          </svg>
          <Slide />
        </div>
        <div className="flex w-[17px] shrink-0 flex-col items-center border-l border-[#b7cff0] bg-linear-to-r from-[#6f93c4] to-[#88a9d6] pt-[6px]">
          <Arrow up />
          <div className="mt-[124px] flex h-[13px] w-[14px] flex-col items-center justify-center gap-px rounded-[2px] border border-[#5b78a5] bg-[#e6edf6]">
            {[0, 1, 2, 3].map((i) => (
              <span key={i} className="h-px w-2 bg-[#5b6b85]" />
            ))}
          </div>
          <div className="mt-auto pb-[6px]"><Arrow /></div>
          <div className="flex h-12 w-full flex-col items-center gap-2 bg-[#a9c8f2] pt-[5px]">
            <button aria-label="Предыдущий слайд" className="flex flex-col"><Arrow up fill="#000" /><Arrow up fill="#000" /></button>
            <button aria-label="Следующий слайд" className="flex flex-col"><Arrow fill="#000" /><Arrow fill="#000" /></button>
          </div>
        </div>
      </div>
    </div>
    <div className="h-1 shrink-0 border-b border-[#5f8fd0] bg-[#aecdf8]" />
    <div className="flex h-[36px] shrink-0">
      <textarea
        aria-label="Заметки к слайду"
        placeholder="Заметки к слайду"
        className="h-full flex-1 resize-none bg-white py-1 pl-[9px] text-[15px] leading-6 outline-none placeholder:text-black"
      />
      <div className="flex w-[17px] flex-col items-center justify-between border-l border-[#b7cff0] bg-[#7d9dca] py-[6px]">
        <Arrow up fill="#6a7fa8" />
        <Arrow fill="#6a7fa8" />
      </div>
    </div>
  </main>
);

const StatusBar = () => (
  <footer className="flex h-[22px] shrink-0 items-center border-t border-[#567db0] bg-linear-to-b from-[#d6e5f8] via-[#b0cdf2] via-50% to-[#d2e3f9] text-[11px] text-[#15306b]">
    <span className="flex h-full w-[91px] items-center border-r border-[#90b0dc] pl-[5px] whitespace-nowrap">Слайд 10 из 39</span>
    <span className="flex h-full w-[86px] items-center justify-center border-r border-[#90b0dc] whitespace-nowrap">"Тема Office"</span>
    <span className="flex h-full w-[103px] items-center justify-center border-r border-[#90b0dc] whitespace-nowrap">Русский (Россия)</span>
    <div className="ml-auto flex h-full items-center border-l border-[#6d93c8] bg-linear-to-b from-[#b9d2f2] to-[#8fb3e4] pl-[5px]">
      <div className="flex h-[18px] w-[56px] divide-x divide-[#88a9d6] rounded-[2px] border border-[#6485b5]">
        <button aria-label="Обычный" className="flex flex-1 items-center justify-center bg-[#fbd37c]">
          <svg width="11" height="9" viewBox="0 0 11 9" fill="#fff" stroke="#444"><path d="M.5.5h10v8H.5zM4 .5v8M4 6h6.500M2 2.500h1M2 4.500h1" /></svg>
        </button>
        <button aria-label="Сортировщик" className="flex flex-1 items-center justify-center">
          <svg width="11" height="10" viewBox="0 0 11 10" fill="#fff" stroke="#444"><path d="M.5.5h4v3h-4zM6.500.5h4v3h-4zM.5 6.500h4v3h-4zM6.500 6.500h4v3h-4z" /></svg>
        </button>
        <button aria-label="Показ слайдов" className="flex flex-1 items-center justify-center">
          <svg width="11" height="11" viewBox="0 0 11 11" fill="#fff" stroke="#444"><path d="M0 1.500h11M1.500 1.500v4h8v-4M5.500 6v3M3 10.500h5" /></svg>
        </button>
      </div>
      <span className="w-[38px] text-center">78%</span>
      <button aria-label="Уменьшить" className="flex size-[15px] items-center justify-center rounded-full border border-[#5a7096] bg-white/60">
        <span className="h-[2px] w-[7px] bg-[#404a5c]" />
      </button>
      <input
        type="range"
        aria-label="Масштаб"
        min="0"
        max="100"
        defaultValue="37"
        className="mx-px h-4 w-[101px] appearance-none bg-[linear-gradient(#6480ae,#6480ae)] bg-[length:100%_1px] bg-center bg-no-repeat [&::-webkit-slider-thumb]:h-[13px] [&::-webkit-slider-thumb]:w-[9px] [&::-webkit-slider-thumb]:appearance-none [&::-webkit-slider-thumb]:rounded-b-[4px] [&::-webkit-slider-thumb]:border [&::-webkit-slider-thumb]:border-[#4f658c] [&::-webkit-slider-thumb]:bg-[#e4ecf7]"
      />
      <button aria-label="Увеличить" className="flex size-[15px] items-center justify-center rounded-full border border-[#5a7096] bg-white/60">
        <svg width="9" height="9" viewBox="0 0 9 9"><path d="M4.500 1v7M1 4.500h7" stroke="#404a5c" strokeWidth="2" /></svg>
      </button>
      <button aria-label="Вписать" className="mr-[3px] ml-[10px]">
        <svg width="15" height="15" viewBox="0 0 15 15" fill="none" stroke="#404a5c">
          <rect x=".5" y=".5" width="14" height="14" rx="1" fill="#e4ecf7" strokeDasharray="2 1" />
          <path d="M7.500 2v4M7.500 9v4M2 7.500h4M9 7.500h4M6 4l1.500-2L9 4M6 11l1.500 2L9 11M4 6L2 7.500 4 9M11 6l2 1.500L11 9" />
        </svg>
      </button>
    </div>
  </footer>
);

const App = () => {
  return (
    <div className={`${UI} flex h-screen min-h-[600px] w-full flex-col overflow-hidden border-x-3 border-t-3 border-[#e81123] text-black`}>
      <TitleBar />
      <TabBar />
      <Ribbon />
      <div className="flex min-h-0 flex-1 bg-[#aecdf8]">
        <SlidesPanel />
        <div className="w-[5px] shrink-0 bg-[#b3d1fb]" />
        <Editor />
      </div>
      <StatusBar />
    </div>
  );
};

export default App;
